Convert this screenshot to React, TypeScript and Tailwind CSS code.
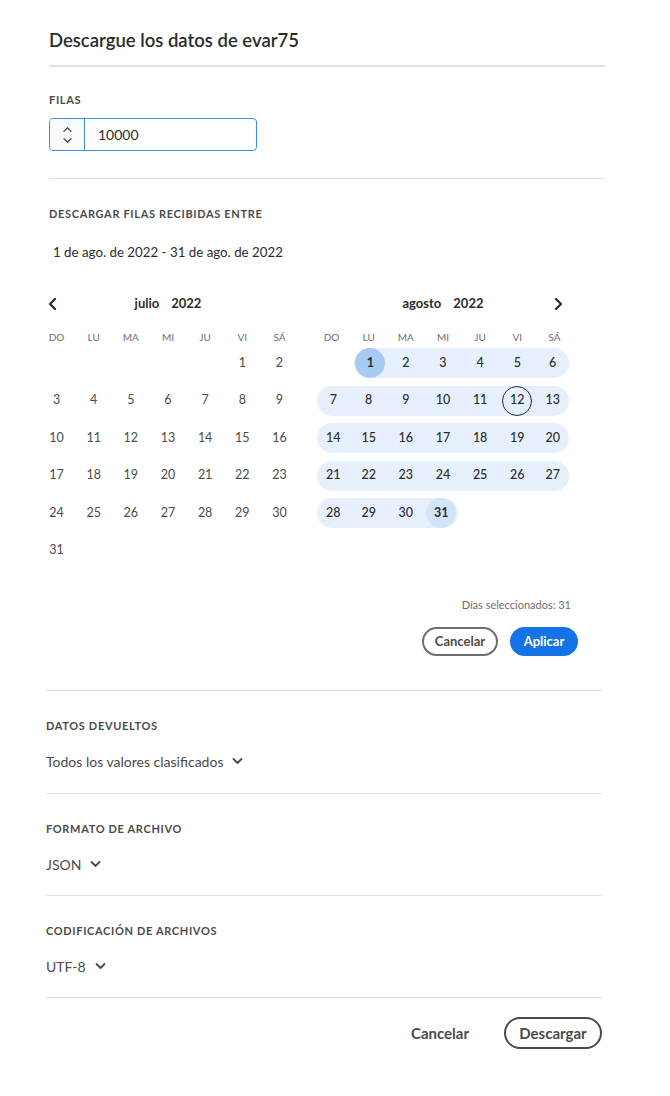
const font = { fontFamily: "Lato, 'Liberation Sans', sans-serif" };

const Chevron = ({ dir, className }: { dir: "left" | "right" | "up" | "down"; className?: string }) => {
  const pts: Record<string, string> = {
    left: "7,1 2,6 7,11",
    right: "2,1 7,6 2,11",
    up: "1,6 5,2 9,6",
    down: "1,2 5,6 9,2",
  };
  const box = dir === "left" || dir === "right" ? "0 0 9 12" : "0 0 10 8";
  return (
    <svg viewBox={box} className={className} fill="none" stroke="currentColor" strokeLinecap="round" strokeLinejoin="round">
      <polyline points={pts[dir]} />
    </svg>
  );
};

const weekdays = ["DO", "LU", "MA", "MI", "JU", "VI", "SÁ"];

type Cell = number | null;

const buildWeeks = (offset: number, days: number): Cell[][] => {
  const cells: Cell[] = [];
  for (let i = 0; i < offset; i++) cells.push(null);
  for (let d = 1; d <= days; d++) cells.push(d);
  while (cells.length % 7) cells.push(null);
  const weeks: Cell[][] = [];
  for (let i = 0; i < cells.length; i += 7) weeks.push(cells.slice(i, i + 7));
  return weeks;
};

const Month = ({
  title,
  year,
  offset,
  days,
  inRange,
  nav,
}: {
  title: string;
  year: string;
  offset: number;
  days: number;
  inRange: boolean;
  nav: "left" | "right";
}) => {
  const weeks = buildWeeks(offset, days);
  return (
    <div className="w-[260px]">
      <div className="relative flex h-[24px] items-center justify-center text-[13px] font-bold text-[#2c2c2c]">
        {nav === "left" ? (
          <Chevron dir="left" className="absolute left-[10px] top-[6px] h-[12px] w-[9px] stroke-[2.2] text-[#2c2c2c]" />
        ) : (
          <Chevron dir="right" className="absolute right-[10px] top-[6px] h-[12px] w-[9px] stroke-[2.2] text-[#2c2c2c]" />
        )}
        <span>{title}</span>
        <span className="ml-[12px]">{year}</span>
      </div>
      <div className="mt-[11px] grid h-[20px] grid-cols-7 items-center text-center text-[10px] text-[#6e6e6e]">
        {weekdays.map((w) => (
          <span key={w}>{w}</span>
        ))}
      </div>
      <div className="mt-[1px] flex flex-col gap-y-[7.5px]">
        {weeks.map((week, wi) => {
          const days = week.filter((d) => d !== null) as number[];
          const first = days[0];
          const last = days[days.length - 1];
          return (
            <div key={wi} className="grid h-[30px] grid-cols-7">
              {week.map((d, di) => {
                if (d === null) return <div key={di} />;
                const isStart = d === first;
                const isEnd = d === last;
                const band = inRange
                  ? `h-[30px] bg-[#e6f0fc] ${isStart ? "ml-[3.5px] rounded-l-full" : ""} ${isEnd ? "mr-[3.5px] rounded-r-full" : ""}`
                  : "h-[30px]";
                let circle = "";
                let text = inRange ? "font-medium text-[#2c2c2c]" : "text-[#4b4b4b]";
                if (inRange && d === 1) {
                  circle = "bg-[#a8cbf4]";
                  text = "font-bold text-[#2c2c2c]";
                } else if (inRange && d === 31) {
                  circle = "bg-[#d2e4fa]";
                  text = "font-bold text-[#2c2c2c]";
                } else if (inRange && d === 12) {
                  circle = "border-[1.5px] border-[#2c2c2c]";
                }
                return (
                  <div key={di} className="flex items-center">
                    <div className={`flex w-full items-center justify-center ${band}`}>
                      <div className={`flex h-[30px] w-[30px] shrink-0 items-center justify-center rounded-full text-[12.5px] ${circle} ${text}`}>
                        {d}
                      </div>
                    </div>
                  </div>
                );
              })}
            </div>
          );
        })}
      </div>
    </div>
  );
};

const Label = ({ children, className = "" }: { children: React.ReactNode; className?: string }) => (
  <div className={`text-[11px] leading-[16px] font-bold tracking-[0.06em] text-[#4b4b4b] uppercase ${className}`}>{children}</div>
);

const Picker = ({ value }: { value: string }) => (
  <div className="mt-[17px] flex h-[20px] items-center text-[14px] text-[#4b4b4b]">
    <span>{value}</span>
    <Chevron dir="down" className="ml-[9px] h-[8px] w-[11px] stroke-[1.8] text-[#4b4b4b]" />
  </div>
);

export default function App() {
  return (
    <div className="min-h-[1096px] w-[670px] bg-white" style={font}>
      <div className="w-[605px] pl-[49px]">
        <h1 className="mt-[28px] text-[18.5px] leading-[24px] font-semibold text-[#2c2c2c]">Descargue los datos de evar75</h1>
        <div className="mt-[13px] h-[2px] bg-[#e1e1e1]" />

        <Label className="mt-[25px]">Filas</Label>
        <div className="mt-[10px] flex h-[33px] w-[208px] overflow-hidden rounded-[4px] border border-[#378ef0]">
          <div className="flex w-[35px] flex-col items-center justify-center gap-[4px] border-r border-[#378ef0] bg-[#fafafa] text-[#4b4b4b]">
            <Chevron dir="up" className="h-[7px] w-[9px] stroke-[1.4]" />
            <Chevron dir="down" className="h-[7px] w-[9px] stroke-[1.4]" />
          </div>
          <div className="flex flex-1 items-center pl-[13px] text-[14px] text-[#2c2c2c]">10000</div>
        </div>
        <div className="mt-[27px] h-px bg-[#e1e1e1]" />

        <Label className="mt-[27px]">Descargar filas recibidas entre</Label>
        <div className="mt-[20px] pl-[4px] text-[13.3px] leading-[20px] text-[#2c2c2c]">1 de ago. de 2022 - 31 de ago. de 2022</div>

        <div className="mt-[30px] -ml-[11px] flex gap-[15px]">
          <Month title="julio" year="2022" offset={5} days={31} inRange={false} nav="left" />
          <Month title="agosto" year="2022" offset={1} days={31} inRange={true} nav="right" />
        </div>

        <div className="mt-[31.5px] pr-[34px] text-right text-[11px] leading-[16px] text-[#6e6e6e]">Días seleccionados: 31</div>
        <div className="mt-[14px] flex justify-end gap-[12px] pr-[27px]">
          <button className="h-[29px] w-[76px] rounded-full border-2 border-[#6e6e6e] text-[13px] font-bold text-[#4b4b4b]">Cancelar</button>
          <button className="h-[29px] w-[68px] rounded-full bg-[#1473e6] text-[13px] font-bold text-white">Aplicar</button>
        </div>
      </div>

      <div className="w-[602px] pl-[46px]">
        <div className="mt-[34px] h-px bg-[#e1e1e1]" />
        <Label className="mt-[27px]">Datos devueltos</Label>
        <Picker value="Todos los valores clasificados" />

        <div className="mt-[22px] h-px bg-[#e1e1e1]" />
        <Label className="mt-[27px]">Formato de archivo</Label>
        <Picker value="JSON" />

        <div className="mt-[21px] h-px bg-[#e1e1e1]" />
        <Label className="mt-[27px]">Codificación de archivos</Label>
        <Picker value="UTF-8" />

        <div className="mt-[21px] h-px bg-[#e1e1e1]" />
        <div className="mt-[19px] flex items-center justify-end gap-[35px]">
          <button className="text-[15px] font-bold text-[#4b4b4b]">Cancelar</button>
          <button className="h-[32px] w-[98px] rounded-full border-2 border-[#4b4b4b] text-[15px] font-bold text-[#4b4b4b]">Descargar</button>
        </div>
      </div>
    </div>
  );
}
